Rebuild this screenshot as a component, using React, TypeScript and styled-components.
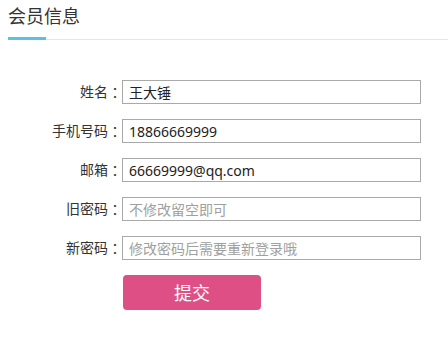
import React from "react";
import styled, { createGlobalStyle } from "styled-components";

const GlobalStyle = createGlobalStyle`
  html, body {
    margin: 0;
    padding: 0;
    background: #ffffff;
  }
  body {
    font-family: "Noto Sans", "Noto Sans CJK SC", sans-serif;
    color: #333333;
  }
  * { box-sizing: border-box; }
`;

const Page = styled.div`
  padding-left: 8px;
  width: 448px;
`;

const Header = styled.div`
  height: 40px;
  display: flex;
  flex-direction: column;
  justify-content: space-between;
  border-bottom: 1px solid #e6e6e6;
`;

const Title = styled.h2`
  margin: 0;
  padding-top: 5px;
  font-size: 18px;
  line-height: 22px;
  font-weight: 400;
  color: #333333;
`;

const Accent = styled.div`
  width: 38px;
  height: 3px;
  margin-bottom: -1px;
  background: #5bc0e6;
`;

const Form = styled.form`
  margin-top: 40px;
  display: grid;
  grid-template-columns: 114px 299px;
  grid-template-rows: repeat(5, 24px) 35px;
  row-gap: 15px;
  align-items: center;
`;

const Label = styled.label`
  height: 24px;
  display: flex;
  align-items: center;
  justify-content: flex-end;
  font-size: 14px;
  line-height: 16px;
  color: #333333;
  white-space: nowrap;
  overflow: hidden;
`;

const Colon = styled.span`
  font-family: "Noto Sans CJK TC", "Noto Sans CJK SC", sans-serif;
  line-height: 16px;
`;

const Field = styled.input`
  display: block;
  height: 24px;
  width: 299px;
  margin: 0;
  padding: 0 6px;
  border: 1px solid #a9a9a9;
  border-radius: 0;
  font-family: "Noto Sans", "Noto Sans CJK SC", sans-serif;
  font-size: 14px;
  color: #222222;
  outline: none;
  &::placeholder {
    color: #a0a0a0;
  }
`;

const Submit = styled.button`
  grid-column: 2;
  justify-self: start;
  margin-left: 1px;
  width: 138px;
  height: 35px;
  padding: 0;
  border: none;
  border-radius: 4px;
  background: #de4f86;
  color: #ffffff;
  font-family: "Noto Sans CJK SC", sans-serif;
  font-size: 18px;
  line-height: 35px;
  cursor: pointer;
`;

type Row = { label: string; value?: string; placeholder?: string };

const rows: Row[] = [
  { label: "姓名", value: "王大锤" },
  { label: "手机号码", value: "18866669999" },
  { label: "邮箱", value: "66669999@qq.com" },
  { label: "旧密码", placeholder: "不修改留空即可" },
  { label: "新密码", placeholder: "修改密码后需要重新登录哦" },
];

export default function App() {
  return (
    <>
      <GlobalStyle />
      <Page>
        <Header>
          <Title>会员信息</Title>
          <Accent />
        </Header>
        <Form onSubmit={(e) => e.preventDefault()}>
          {rows.map((r, i) => (
            <React.Fragment key={i}>
              <Label htmlFor={`f${i}`}>
                {r.label}
                <Colon>：</Colon>
              </Label>
              <Field
                id={`f${i}`}
                type="text"
                defaultValue={r.value}
                placeholder={r.placeholder}
              />
            </React.Fragment>
          ))}
          <Submit type="submit">提交</Submit>
        </Form>
      </Page>
    </>
  );
}
